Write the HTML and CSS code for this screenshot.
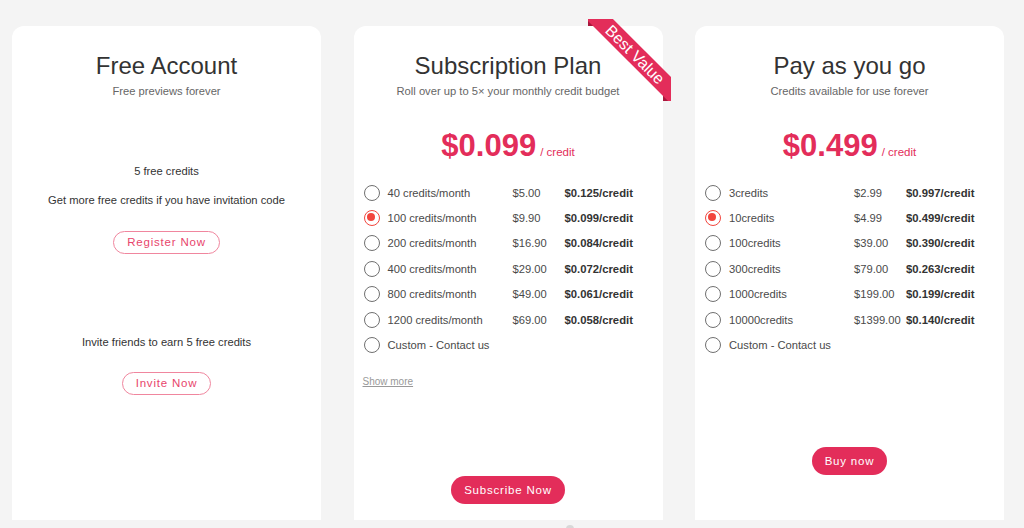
FILE: index.html
```html
<!DOCTYPE html>
<html>
<head>
<meta charset="utf-8">
<link rel="stylesheet" href="styles.css">
</head>
<body>
<div class="plans">
  <div class="card">
    <h2 class="title">Free Account</h2>
    <p class="sub">Free previews forever</p>
    <div class="free">
      <p class="line l1">5 free credits</p>
      <p class="line l2">Get more free credits if you have invitation code</p>
      <button class="outline reg">Register Now</button>
      <p class="line l3">Invite friends to earn 5 free credits</p>
      <button class="outline inv">Invite Now</button>
    </div>
  </div>

  <div class="card">
    <div class="ribbon"><span>Best Value</span></div>
    <h2 class="title">Subscription Plan</h2>
    <p class="sub">Roll over up to 5× your monthly credit budget</p>
    <div class="price"><span class="big">$0.099</span><span class="unit">/ credit</span></div>
    <ul class="opts">
      <li><i class="radio"></i><span class="lab">40 credits/month</span><span class="amt">$5.00</span><b>$0.125/credit</b></li>
      <li><i class="radio on"></i><span class="lab">100 credits/month</span><span class="amt">$9.90</span><b>$0.099/credit</b></li>
      <li><i class="radio"></i><span class="lab">200 credits/month</span><span class="amt">$16.90</span><b>$0.084/credit</b></li>
      <li><i class="radio"></i><span class="lab">400 credits/month</span><span class="amt">$29.00</span><b>$0.072/credit</b></li>
      <li><i class="radio"></i><span class="lab">800 credits/month</span><span class="amt">$49.00</span><b>$0.061/credit</b></li>
      <li><i class="radio"></i><span class="lab">1200 credits/month</span><span class="amt">$69.00</span><b>$0.058/credit</b></li>
      <li><i class="radio"></i><span class="lab">Custom - Contact us</span></li>
    </ul>
    <a class="more">Show more</a>
    <div class="act sub-act"><button class="solid">Subscribe Now</button></div>
  </div>

  <div class="card">
    <h2 class="title">Pay as you go</h2>
    <p class="sub">Credits available for use forever</p>
    <div class="price"><span class="big">$0.499</span><span class="unit">/ credit</span></div>
    <ul class="opts">
      <li><i class="radio"></i><span class="lab">3credits</span><span class="amt">$2.99</span><b>$0.997/credit</b></li>
      <li><i class="radio on"></i><span class="lab">10credits</span><span class="amt">$4.99</span><b>$0.499/credit</b></li>
      <li><i class="radio"></i><span class="lab">100credits</span><span class="amt">$39.00</span><b>$0.390/credit</b></li>
      <li><i class="radio"></i><span class="lab">300credits</span><span class="amt">$79.00</span><b>$0.263/credit</b></li>
      <li><i class="radio"></i><span class="lab">1000credits</span><span class="amt">$199.00</span><b>$0.199/credit</b></li>
      <li><i class="radio"></i><span class="lab">10000credits</span><span class="amt">$1399.00</span><b>$0.140/credit</b></li>
      <li><i class="radio"></i><span class="lab">Custom - Contact us</span></li>
    </ul>
    <div class="act buy-act"><button class="solid">Buy now</button></div>
  </div>
</div>
<div class="dot"></div>
</body>
</html>
```
FILE: styles.css
```css
* { box-sizing: border-box; }
html, body { margin: 0; padding: 0; }
body {
  background: #f4f4f4;
  font-family: "Liberation Sans", Arial, sans-serif;
  color: #333;
  width: 1024px;
  height: 528px;
  overflow: hidden;
  position: relative;
}
.plans {
  display: flex;
  gap: 32.5px;
  padding: 26px 0 0 12px;
}
.card {
  position: relative;
  width: 309px;
  height: 494px;
  background: #fff;
  border-radius: 12px 12px 0 0;
  padding-top: 26px;
  text-align: center;
}
.title {
  margin: 0;
  font-size: 24px;
  line-height: 28px;
  font-weight: normal;
  color: #333;
}
.sub {
  margin: 3px 0 0;
  font-size: 11.2px;
  line-height: 16px;
  color: #666;
}
.free .line {
  margin: 0;
  font-size: 11.2px;
  line-height: 16px;
  color: #333;
}
.free .l1 { margin-top: 64px; }
.free .l2 { margin-top: 13px; }
.free .l3 { margin-top: 80px; }
.outline {
  display: inline-block;
  height: 23px;
  border: 1px solid #f0869e;
  border-radius: 12px;
  background: #fff;
  color: #e8456c;
  font-family: "Liberation Sans", Arial, sans-serif;
  font-size: 11.5px;
  letter-spacing: 0.8px;
  padding: 0 13px;
  line-height: 21px;
}
.reg { margin-top: 23px; }
.inv { margin-top: 22px; }

.price {
  margin-top: 27px;
  height: 40px;
  line-height: 40px;
  color: #e32d5a;
}
.big {
  font-size: 31px;
  font-weight: bold;
}
.unit {
  font-size: 11.5px;
  margin-left: 4px;
}
.opts {
  list-style: none;
  margin: 14px 0 0;
  padding: 0 0 0 10px;
  text-align: left;
}
.opts li {
  display: flex;
  align-items: center;
  height: 25.4px;
  font-size: 11.2px;
  color: #4a4a4a;
}
.radio {
  width: 16px;
  height: 16px;
  border: 1.6px solid #707070;
  border-radius: 50%;
  margin-right: 8px;
  flex: none;
  position: relative;
}
.radio.on { border-color: #f2453d; }
.radio.on::after {
  content: "";
  position: absolute;
  left: 2.4px;
  top: 2.4px;
  width: 8px;
  height: 8px;
  border-radius: 50%;
  background: #f2453d;
}
.lab { width: 125px; flex: none; }
.amt { width: 52px; flex: none; }
.opts b { color: #333; font-size: 11.3px; }
.more {
  display: block;
  text-align: left;
  margin: 17px 0 0 9px;
  font-size: 10px;
  line-height: 14px;
  color: #999;
  text-decoration: underline;
}
.solid {
  height: 28px;
  border: none;
  border-radius: 14px;
  background: #e32d5a;
  color: #fff;
  font-family: "Liberation Sans", Arial, sans-serif;
  font-size: 11.5px;
  letter-spacing: 0.8px;
  padding: 0 13px;
}
.sub-act { margin-top: 87px; }
.buy-act { margin-top: 89px; }

.ribbon {
  position: absolute;
  top: -7px;
  right: -8px;
  width: 83px;
  height: 82px;
  overflow: hidden;
}
.ribbon::before, .ribbon::after {
  content: "";
  position: absolute;
  z-index: -1;
  border: 4px solid #a8173c;
  border-top-color: transparent;
  border-right-color: transparent;
}
.ribbon::before { top: 0; left: 0; }
.ribbon::after { bottom: 0; right: 0; }
.ribbon span {
  position: absolute;
  display: block;
  width: 130px;
  height: 19px;
  left: -17.5px;
  top: 25.5px;
  transform: rotate(45deg);
  background: #e32d5a;
  color: #fff;
  font-size: 16px;
  line-height: 19px;
  text-align: center;
}
.dot {
  position: absolute;
  left: 566px;
  top: 525px;
  width: 8px;
  height: 8px;
  border-radius: 50%;
  background: #d8d8d8;
}
```
